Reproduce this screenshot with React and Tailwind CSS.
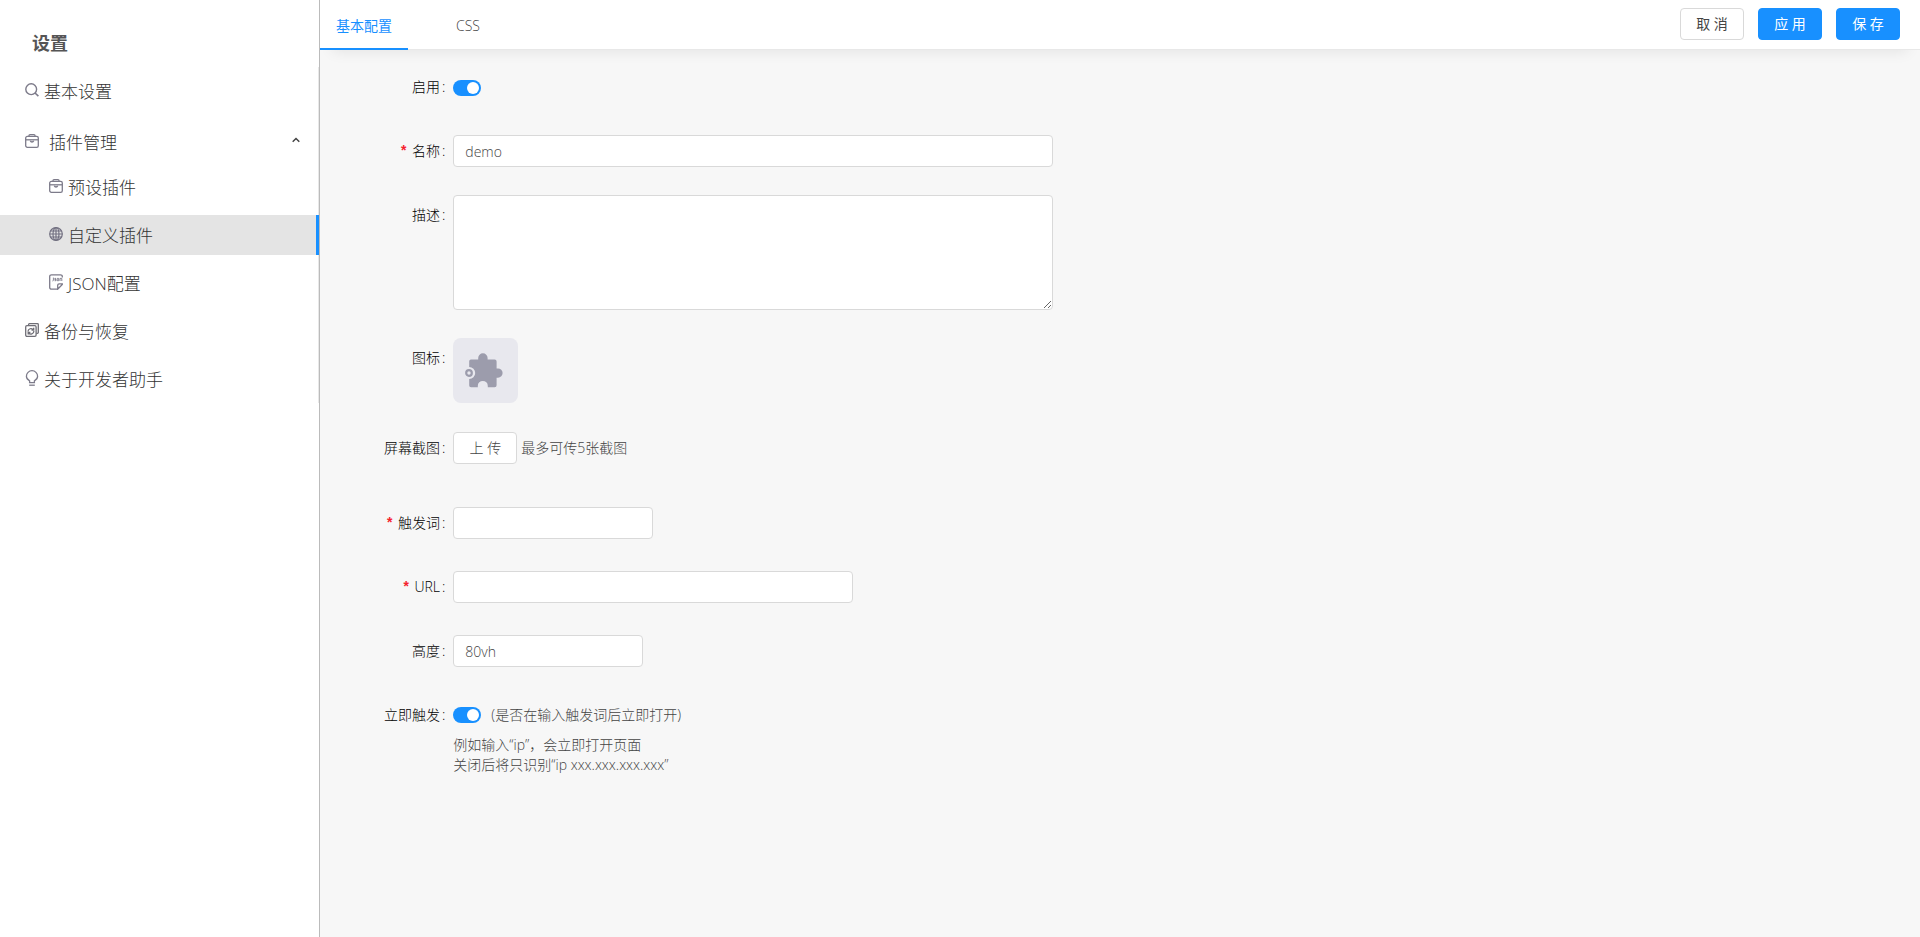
import React, { useState } from "react";
import clsx from "clsx";

const SearchIcon = () => (
  <svg viewBox="0 0 14 14" className="w-3.5 h-3.5" fill="none" stroke="#7d7b8a">
    <circle cx="6.2" cy="6.2" r="5.4" strokeWidth="1.4" />
    <path d="M10 10l3.4 3.2" strokeWidth="1.6" />
  </svg>
);

const BriefcaseIcon = () => (
  <svg
    viewBox="0 0 14 14"
    className="w-3.5 h-3.5"
    fill="none"
    stroke="#7d7b8a"
    strokeWidth="1.3"
  >
    <rect x="0.7" y="2.4" width="12.6" height="10.9" rx="1.6" />
    <path d="M4 2.4v-.8c0-.6.4-.9 1-.9h4c.6 0 1 .3 1 .9v.8" />
    <path d="M.7 5.8h12.6" />
    <path d="M5.3 6.8a1.8 1.8 0 0 0 3.4 0" />
  </svg>
);

const GlobeIcon = () => (
  <svg
    viewBox="0 0 14 14"
    className="w-3.5 h-3.5"
    fill="none"
    stroke="#737182"
    strokeWidth="1.2"
  >
    <circle cx="7" cy="7" r="6.3" />
    <ellipse cx="7" cy="7" rx="3" ry="6.3" />
    <path d="M7 .7v12.6M.7 7h12.6M1.5 4h11M1.5 10h11" />
  </svg>
);

const JsonIcon = () => (
  <svg
    viewBox="0 0 14 16"
    className="w-3.5 h-4"
    fill="none"
    stroke="#7d7b8a"
    strokeWidth="1.3"
  >
    <path d="M8.6 15.2H2.5A1.8 1.8 0 0 1 .7 13.4V2.6A1.8 1.8 0 0 1 2.5.8h9a1.8 1.8 0 0 1 1.8 1.8v.8" />
    <path d="M13.3 9.9v.6l-4.6 4.7v-3.9c0-.8.6-1.4 1.4-1.4z" />
    <path
      d="M4.4 3.6v2.6c0 .6-.3.8-.9.8M7 4.4H5.8v1.1H7v1.2H5.6M8.2 4.4h1.5v2.3H8.2zM11 7V4.400h1.8V7"
      strokeWidth=".9"
    />
  </svg>
);

const BackupIcon = () => (
  <svg
    viewBox="0 0 14 14"
    className="w-3.5 h-3.5"
    fill="none"
    stroke="#6f6e76"
    strokeWidth="1.3"
  >
    <path d="M3.6 2.6V1.500c0-.5.3-.8.8-.8h8.1c.5 0 .8.3.8.8v8.1c0 .5-.3.8-.8.8h-1.2" />
    <rect x="0.7" y="2.7" width="10.4" height="10.6" rx="1.2" />
    <path d="M3 8.6a3 3 0 0 1 5.4-1.8M8.7 4.8v2.3H6.5M8.9 8a3 3 0 0 1-5.4 1.8M3.2 11.6V9.500h2.2" />
  </svg>
);

const BulbIcon = () => (
  <svg
    viewBox="0 0 14 16"
    className="w-3.5 h-4"
    fill="none"
    stroke="#7d7b8a"
    strokeWidth="1.3"
  >
    <path d="M4.6 12.6v-1.8C2.7 9.8 1.4 8.3 1.4 6.3a5.6 5.6 0 0 1 11.2 0c0 2-1.3 3.5-3.2 4.5v1.8z" />
    <path d="M4.2 15.2h5.6" />
  </svg>
);

const PuzzleIcon = () => (
  <svg viewBox="0 0 38 35" className="w-[38px] h-[35px]" fill="#9c9cac">
    <path d="M6 6.5h7.2V5a4.7 4.7 0 0 1 9.4 0v1.5h7a2 2 0 0 1 2 2v7H33a4.6 4.6 0 0 1 0 9.2h-1.4v7.5a2 2 0 0 1-2 2h-6.8v-1.3a5 5 0 0 0-10 0v1.3H6a1.8 1.8 0 0 1-1.8-1.8V26a6 6 0 0 0 0-12V8.3A1.8 1.8 0 0 1 6 6.5z" />
    <circle
      cx="4"
      cy="20"
      r="2.8"
      fill="none"
      stroke="#9c9cac"
      strokeWidth="2.2"
    />
  </svg>
);

const MenuItem = ({ icon, text, sub, active }) => (
  <a
    href="#"
    className={clsx(
      "flex items-center gap-[5px] h-10 pt-0.5 mb-2 last:mb-0",
      sub ? "pl-[49px]" : "pl-[25px]",
      active && "-mr-px bg-[#e4e4e4] border-r-3 border-[#1890ff]"
    )}
  >
    <span className="mb-1">{icon}</span>
    <span className="pt-px">{text}</span>
  </a>
);

const Sidebar = () => (
  <aside className="w-80 shrink-0 bg-white border-r border-[#bbb] text-[17px] text-[#333]">
    <h1 className="h-[67px] pt-[29px] pl-8 text-lg leading-7 font-bold text-[#555]">
      设置
    </h1>
    <nav className="pt-1 pb-1 border-r border-[#e8e8e8]">
      <MenuItem icon={<SearchIcon />} text="基本设置" />
      <button
        type="button"
        className="flex items-center w-full h-10 mt-3 mb-1 pl-[25px] pr-[18px]"
      >
        <span className="mb-1">
          <BriefcaseIcon />
        </span>
        <span className="ml-2.5">插件管理</span>
        <svg
          viewBox="0 0 8 6"
          className="w-2 h-1.5 ml-auto mb-1.5"
          fill="none"
          stroke="#444"
          strokeWidth="1.5"
        >
          <path d="M.7 4.8L4 1.500l3.3 3.3" />
        </svg>
      </button>
      <MenuItem sub icon={<BriefcaseIcon />} text="预设插件" />
      <MenuItem sub active icon={<GlobeIcon />} text="自定义插件" />
      <MenuItem sub icon={<JsonIcon />} text="JSON配置" />
      <MenuItem icon={<BackupIcon />} text="备份与恢复" />
      <MenuItem icon={<BulbIcon />} text="关于开发者助手" />
    </nav>
  </aside>
);

const Field = ({ id, label, required, tall, className, children }) => (
  <div className={clsx("flex items-start", className)}>
    <label
      htmlFor={id}
      className={clsx(
        "w-1/12 shrink-0 pr-2 text-right text-black whitespace-nowrap",
        tall ? "leading-10" : "leading-8"
      )}
    >
      {required && (
        <span className="mr-1 font-['Liberation_Mono',monospace] leading-none font-bold text-[#f5222d]">
          *
        </span>
      )}
      {label}
      <span className="ml-0.5">:</span>
    </label>
    <div>{children}</div>
  </div>
);

const Switch = ({ id }) => {
  const [checked, setChecked] = useState(true);

  return (
    <input
      id={id}
      type="checkbox"
      role="switch"
      checked={checked}
      onChange={(e) => setChecked(e.target.checked)}
      className="appearance-none block w-7 h-4 rounded-full bg-gray-400 checked:bg-[#1890ff] before:block before:w-3 before:h-3 before:mt-0.5 before:ml-0.5 checked:before:ml-3.5 before:rounded-full before:bg-white"
    />
  );
};

const inputStyle =
  "block h-8 px-[11px] bg-white border border-[#d9d9d9] rounded outline-none";
const buttonStyle = "w-16 h-8 rounded border whitespace-pre";

const App = () => {
  const [name, setName] = useState("demo");
  const [height, setHeight] = useState("80vh");

  return (
    <div className="flex min-h-screen bg-[#f7f7f7] font-['Open_Sans','Noto_Sans_CJK_SC',sans-serif] font-light text-sm text-[#444]">
      <Sidebar />
      <main className="flex-1">
        <header className="flex justify-between h-[50px] pr-5 bg-white border-b border-[#e8e8e8] shadow-[0_14px_14px_-12px_rgba(0,0,0,0.08)]">
          <div role="tablist" className="flex gap-8">
            <button
              type="button"
              role="tab"
              aria-selected="true"
              className="h-[50px] px-4 pb-1 pt-2 border-b-2 border-[#1890ff] text-[#1890ff] font-normal"
            >
              基本配置
            </button>
            <button
              type="button"
              role="tab"
              aria-selected="false"
              className="h-[50px] px-4 pb-1 pt-2 border-b-2 border-transparent"
            >
              CSS
            </button>
          </div>
          <div className="flex gap-3.5 pt-2 font-normal">
            <button
              type="button"
              className={clsx(buttonStyle, "bg-white border-[#d9d9d9]")}
            >
              取 消
            </button>
            <button
              type="button"
              className={clsx(
                buttonStyle,
                "bg-[#1890ff] border-[#1890ff] text-white"
              )}
            >
              应 用
            </button>
            <button
              type="button"
              className={clsx(
                buttonStyle,
                "bg-[#1890ff] border-[#1890ff] text-white"
              )}
            >
              保 存
            </button>
          </div>
        </header>
        <form className="pt-[21px]">
          <Field id="enable" label="启用" className="mb-8">
            <div className="pt-[9px]">
              <Switch id="enable" />
            </div>
          </Field>
          <Field id="name" label="名称" required className="mb-7">
            <input
              id="name"
              className={clsx(inputStyle, "w-[600px]")}
              value={name}
              onChange={(e) => setName(e.target.value)}
            />
          </Field>
          <Field id="desc" label="描述" tall className="mb-7">
            <textarea
              id="desc"
              className="block w-[600px] h-[115px] px-[11px] py-1 bg-white border border-[#d9d9d9] rounded outline-none"
            />
          </Field>
          <Field id="icon" label="图标" tall className="mb-[29px]">
            <button
              id="icon"
              type="button"
              className="flex items-center pl-3 w-[65px] h-[65px] rounded-lg bg-[#e8e8ee]"
            >
              <PuzzleIcon />
            </button>
          </Field>
          <Field id="upload" label="屏幕截图" className="mb-[43px]">
            <div className="flex items-center gap-1">
              <button
                id="upload"
                type="button"
                className={clsx(buttonStyle, "bg-white border-[#d9d9d9]")}
              >
                上 传
              </button>
              <span>最多可传5张截图</span>
            </div>
          </Field>
          <Field id="keyword" label="触发词" required className="mb-8">
            <input id="keyword" className={clsx(inputStyle, "w-[200px]")} />
          </Field>
          <Field id="url" label="URL" required className="mb-8">
            <input id="url" className={clsx(inputStyle, "w-[400px]")} />
          </Field>
          <Field id="height" label="高度" className="mb-8">
            <input
              id="height"
              className={clsx(inputStyle, "w-[190px]")}
              value={height}
              onChange={(e) => setHeight(e.target.value)}
            />
          </Field>
          <Field id="instant" label="立即触发">
            <div className="flex items-center gap-2.5 h-8">
              <Switch id="instant" />
              <span>(是否在输入触发词后立即打开)</span>
            </div>
            <p className="mt-1 leading-5">
              例如输入“ip”，会立即打开页面
              <br />
              关闭后将只识别“ip xxx.xxx.xxx.xxx”
            </p>
          </Field>
        </form>
      </main>
    </div>
  );
};

export default App;
